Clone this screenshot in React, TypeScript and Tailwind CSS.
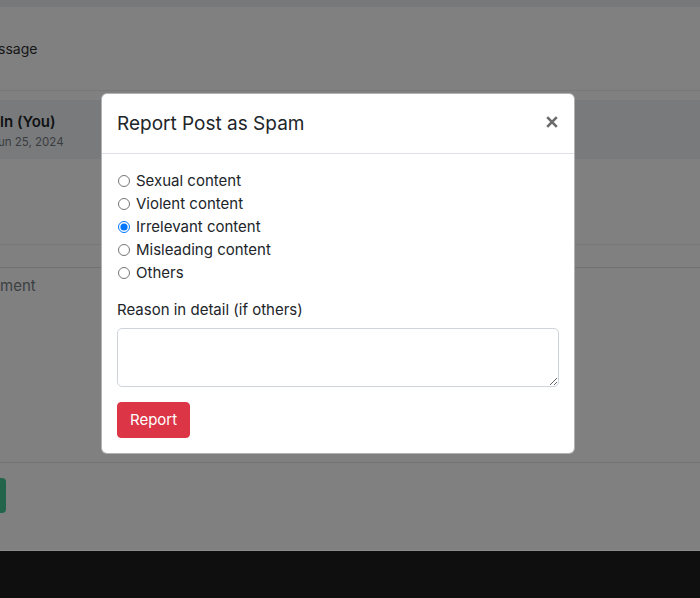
import React from "react";

const options = [
  "Sexual content",
  "Violent content",
  "Irrelevant content",
  "Misleading content",
  "Others",
];

export default function App() {
  return (
    <div
      className="relative w-[700px] h-[598px] overflow-hidden bg-[#808080]"
      style={{ fontFamily: "Inter, 'Noto Sans', 'Liberation Sans', sans-serif" }}
    >
      {/* dimmed page underneath */}
      <div className="flex flex-col">
        <div className="h-[7px] bg-[#777879]" />
        <div className="h-[83px] flex items-center text-[14px] leading-[23px] text-[#151617]">
          <span className="ml-[-2px]">ssage</span>
        </div>
        <div className="h-px bg-[#777878]" />
        <div className="h-[9px]" />
        <div className="h-[59px] bg-[#797a7c] flex flex-col pt-[10px]">
          <div className="text-[15px] leading-[23px] font-semibold text-[#101214]">ln (You)</div>
          <div className="text-[11.5px] leading-[19px] text-[#3a3d40]">
            <span className="ml-[-2px]">un 25, 2024</span>
          </div>
        </div>
        <div className="h-[85px]" />
        <div className="h-px bg-[#787878]" />
        <div className="h-[22px]" />
        <div className="h-px bg-[#6f7173]" />
        <div className="h-[194px] pt-[6px] text-[15px] leading-[23px] text-[#3c3f42]">ment</div>
        <div className="h-px bg-[#6f7371]" />
        <div className="h-[87px] pt-[15px]">
          <div className="w-[6px] h-[35px] bg-[#22654a] rounded-r-[4px]" />
        </div>
        <div className="h-px bg-[#8c8c8c]" />
        <div className="h-[47px] bg-[#0f0f0f]" />
      </div>

      {/* modal */}
      <div className="absolute left-[101px] top-[93px] w-[474px] bg-white rounded-[6px] border border-black/30 text-[#212529]">
        <div className="h-[60px] flex items-center justify-between px-[15px] border-b border-[#dee2e6]">
          <h5 className="text-[19px] leading-[28px] font-normal">Report Post as Spam</h5>
          <svg width="12" height="12" viewBox="0 0 12 12" className="mr-[1px] mb-[4px]">
            <path d="M1.2 1.2 L10.8 10.8 M10.8 1.2 L1.2 10.8" stroke="#6b6b6b" strokeWidth="2.6" strokeLinecap="butt" />
          </svg>
        </div>
        <div className="p-[15px] flex flex-col">
          <div className="flex flex-col">
            {options.map((o) => (
              <label key={o} className="flex items-center h-[23px] text-[15px] leading-[23px]">
                <input
                  type="radio"
                  name="reason"
                  defaultChecked={o === "Irrelevant content"}
                  className="m-0 ml-[1px] w-[12px] h-[12px]"
                />
                <span className="ml-[6px]">{o}</span>
              </label>
            ))}
          </div>
          <div className="mt-[14px] text-[15px] leading-[23px] mb-[7px]">Reason in detail (if others)</div>
          <textarea className="h-[59px] w-full border border-[#ced4da] rounded-[5px] px-3 py-1.5 text-[15px]" />
          <div className="mt-[15px]">
            <button className="h-[36px] px-[12px] bg-[#dc3545] text-white text-[15px] rounded-[4px] border border-[#dc3545]">
              Report
            </button>
          </div>
        </div>
      </div>
    </div>
  );
}
